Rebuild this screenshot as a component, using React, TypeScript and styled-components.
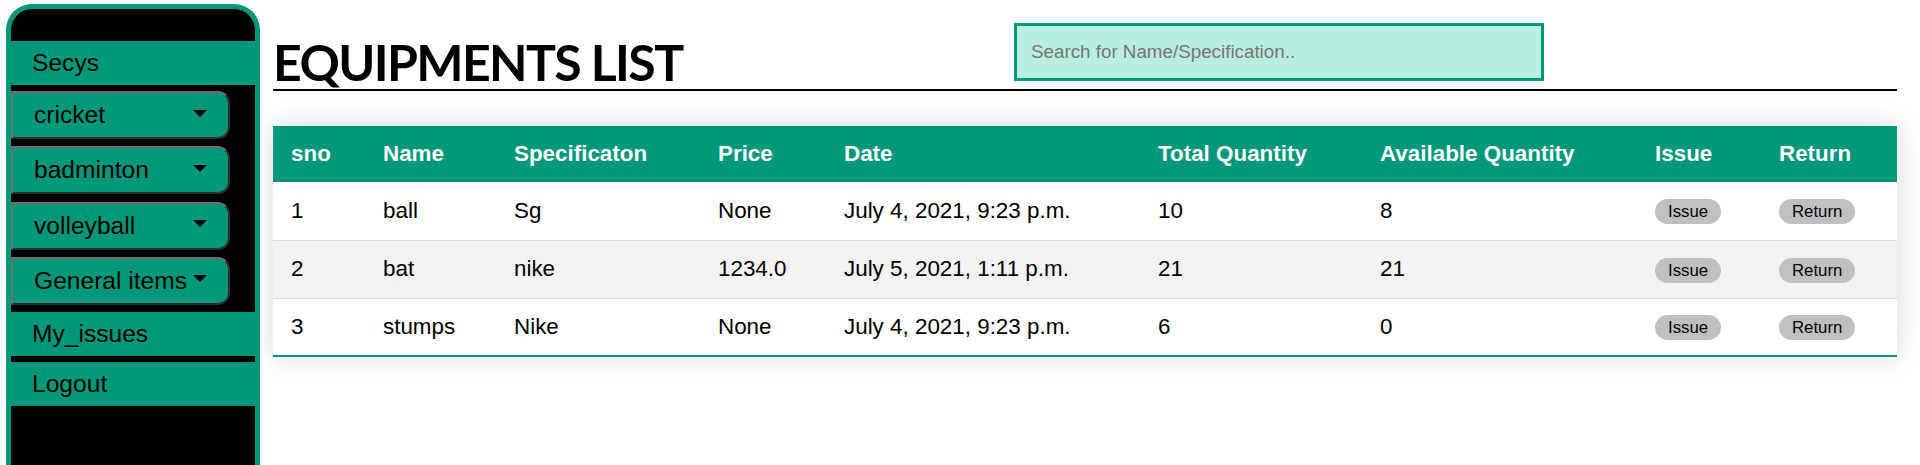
import React from "react";
import styled, { createGlobalStyle } from "styled-components";

interface Equipment {
  sno: number;
  name: string;
  spec: string;
  price: string;
  date: string;
  total: number;
  available: number;
}

const equipments: Equipment[] = [
  { sno: 1, name: "ball", spec: "Sg", price: "None", date: "July 4, 2021, 9:23 p.m.", total: 10, available: 8 },
  { sno: 2, name: "bat", spec: "nike", price: "1234.0", date: "July 5, 2021, 1:11 p.m.", total: 21, available: 21 },
  { sno: 3, name: "stumps", spec: "Nike", price: "None", date: "July 4, 2021, 9:23 p.m.", total: 6, available: 0 },
];

const sports = ["cricket", "badminton", "volleyball", "General items"];

// column widths taken so the header text lines up with the screenshot
const columns = [92, 131, 204, 126, 314, 222, 275, 124, 136];

const GlobalStyle = createGlobalStyle`
  html, body {
    margin: 0;
    padding: 0;
    background: #ffffff;
    overflow: hidden;
  }
  body {
    font-family: "Liberation Sans", Arial, sans-serif;
  }
`;

const App: React.FC = () => {
  return (
    <>
      <GlobalStyle />
      <Page>
        <Sidebar>
          <TopSpace />
          <NavLink>Secys</NavLink>
          <DropdownList>
            {sports.map((sport) => (
              <DropdownButton key={sport}>
                <span>{sport}</span>
                <Caret />
              </DropdownButton>
            ))}
          </DropdownList>
          <NavLink>My_issues</NavLink>
          <Separator />
          <NavLink>Logout</NavLink>
        </Sidebar>
        <Main>
          <Header>
            <Title>EQUIPMENTS LIST</Title>
            <SearchInput type="text" placeholder="Search for Name/Specification.." />
          </Header>
          <Table>
            <colgroup>
              {columns.map((w, i) => (
                <col key={i} style={{ width: w }} />
              ))}
            </colgroup>
            <thead>
              <HeadRow>
                <th>sno</th>
                <th>Name</th>
                <th>Specificaton</th>
                <th>Price</th>
                <th>Date</th>
                <th>Total Quantity</th>
                <th>Available Quantity</th>
                <th>Issue</th>
                <th>Return</th>
              </HeadRow>
            </thead>
            <tbody>
              {equipments.map((item) => (
                <BodyRow key={item.sno}>
                  <td>{item.sno}</td>
                  <td>{item.name}</td>
                  <td>{item.spec}</td>
                  <td>{item.price}</td>
                  <td>{item.date}</td>
                  <td>{item.total}</td>
                  <td>{item.available}</td>
                  <td>
                    <PillButton>Issue</PillButton>
                  </td>
                  <td>
                    <PillButton>Return</PillButton>
                  </td>
                </BodyRow>
              ))}
            </tbody>
          </Table>
        </Main>
      </Page>
    </>
  );
};

const Page = styled.div`
  display: flex;
  align-items: flex-start;
  width: 1920px;
  height: 465px;
`;

const Sidebar = styled.nav`
  flex: 0 0 254px;
  box-sizing: border-box;
  margin: 4px 0 0 6px;
  height: 480px;
  background: #000000;
  border: 5px solid #009879;
  border-bottom: none;
  border-radius: 26px 26px 0 0;
  overflow: hidden;
  display: flex;
  flex-direction: column;
`;

const TopSpace = styled.div`
  height: 32px;
`;

const NavLink = styled.a`
  display: flex;
  align-items: center;
  height: 44px;
  padding-left: 21px;
  background: #009879;
  color: #000000;
  font-size: 24.6px;
  text-decoration: none;
`;

const Separator = styled.div`
  height: 6px;
`;

const DropdownList = styled.div`
  display: flex;
  flex-direction: column;
  gap: 7.3px;
  padding: 6px 0 7px 0;
`;

const DropdownButton = styled.button`
  display: flex;
  align-items: center;
  box-sizing: border-box;
  width: 219px;
  height: 48px;
  padding: 0 21px 0 21px;
  background: #009879;
  color: #000000;
  font-family: "Liberation Sans", Arial, sans-serif;
  font-size: 24.6px;
  border-top: 2px solid #6e6e6e;
  border-left: 2px solid #6e6e6e;
  border-bottom: 2px solid #2e2e2e;
  border-right: 2px solid #2e2e2e;
  border-radius: 0 12px 12px 0;
  text-align: left;
  white-space: nowrap;
`;

const Caret = styled.span`
  margin-left: auto;
  margin-top: -4px;
  width: 0;
  height: 0;
  border-left: 7px solid transparent;
  border-right: 7px solid transparent;
  border-top: 7px solid #000000;
`;

const Main = styled.main`
  flex: 1;
  padding: 23px 23px 0 13px;
`;

const Header = styled.header`
  display: grid;
  grid-template-columns: 741px 530px 1fr;
  align-items: end;
  border-bottom: 2px solid #000000;
`;

const Title = styled.h1`
  margin: 0;
  padding-bottom: 2px;
  font-family: Lato, "Liberation Sans", sans-serif;
  font-weight: 700;
  font-size: 50px;
  letter-spacing: -1.6px;
  line-height: 1;
  color: #000000;
`;

const SearchInput = styled.input`
  box-sizing: border-box;
  width: 530px;
  height: 58px;
  margin-bottom: 8px;
  padding: 0 14px;
  background: #bbeee2;
  border: 3px solid #009879;
  outline: none;
  font-family: "Liberation Sans", Arial, sans-serif;
  font-size: 18.8px;
  color: #000000;

  &::placeholder {
    color: #757575;
  }
`;

const Table = styled.table`
  width: 1624px;
  margin-top: 35px;
  table-layout: fixed;
  border-collapse: collapse;
  font-size: 22.4px;
  box-shadow: 0 0 25px rgba(0, 0, 0, 0.15);

  th,
  td {
    padding: 0 18px;
    text-align: left;
    white-space: nowrap;
  }
`;

const HeadRow = styled.tr`
  height: 56px;
  background: #009879;
  color: #ffffff;

  th {
    font-weight: 700;
  }
`;

const BodyRow = styled.tr`
  height: 58px;
  color: #000000;
  border-bottom: 1px solid #dddddd;

  &:nth-of-type(even) {
    background: #f3f3f3;
  }

  &:last-of-type {
    border-bottom: 2px solid #009879;
  }
`;

const PillButton = styled.button`
  height: 25px;
  padding: 0 13px;
  background: #c0c0c0;
  border: none;
  border-radius: 13px;
  color: #000000;
  font-family: "Liberation Sans", Arial, sans-serif;
  font-size: 16.8px;
  line-height: 25px;
`;

export default App;
